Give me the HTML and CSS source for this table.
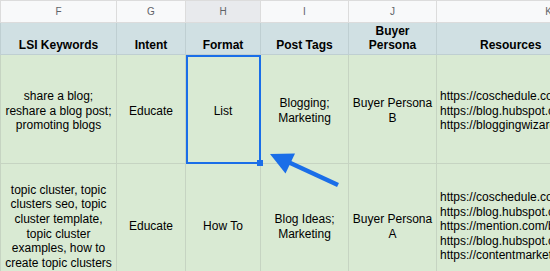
FILE: index.html
```html
<!DOCTYPE html>
<html>
<head>
<meta charset="utf-8">
<link rel="stylesheet" href="styles.css">
</head>
<body>
<div class="sheet">
  <table class="grid">
    <colgroup>
      <col class="c-f"><col class="c-g"><col class="c-h"><col class="c-i"><col class="c-j"><col class="c-k">
    </colgroup>
    <tr class="letters">
      <th>F</th><th>G</th><th class="sel-col">H</th><th>I</th><th>J</th><th>K</th>
    </tr>
    <tr class="head">
      <th>LSI Keywords</th><th>Intent</th><th>Format</th><th>Post Tags</th><th>Buyer<br>Persona</th><th class="res">Resources</th>
    </tr>
    <tr class="row1">
      <td>share a blog;<br>reshare a blog post;<br>promoting blogs</td>
      <td>Educate</td>
      <td class="selected">List<span class="handle"></span></td>
      <td>Blogging;<br>Marketing</td>
      <td>Buyer Persona<br>B</td>
      <td class="links">https://coschedule.com/blog/share-a-blog<br>https://blog.hubspot.com/marketing/promote<br>https://bloggingwizard.com/promote-blog</td>
    </tr>
    <tr class="row2">
      <td>topic cluster, topic<br>clusters seo, topic<br>cluster template,<br>topic cluster<br>examples, how to<br>create topic clusters</td>
      <td>Educate</td>
      <td>How To</td>
      <td>Blog Ideas;<br>Marketing</td>
      <td>Buyer Persona<br>A</td>
      <td class="links">https://coschedule.com/blog/topic-clusters<br>https://blog.hubspot.com/marketing/topic<br>https://mention.com/blog/topic-clusters<br>https://blog.hubspot.com/marketing/pillar<br>https://contentmarketinginstitute.com/</td>
    </tr>
  </table>
  <svg class="arrow" width="550" height="271" viewBox="0 0 550 271">
    <line x1="338" y1="185" x2="286" y2="161" stroke="#1a6ee8" stroke-width="4.5" stroke-linecap="butt"/>
    <polygon points="270,154 295,153.5 285.5,173.5" fill="#1a6ee8"/>
  </svg>
</div>
</body>
</html>
```
FILE: styles.css
```css
html, body {
  margin: 0;
  padding: 0;
  overflow: hidden;
  background: #ffffff;
}
.sheet {
  position: relative;
  width: 550px;
  height: 271px;
  overflow: hidden;
}
.grid {
  border-collapse: collapse;
  table-layout: fixed;
  width: 660px;
  font-family: "Liberation Sans", Arial, sans-serif;
  font-size: 12px;
  line-height: 14.6px;
  color: #000;
}
.c-f { width: 116px; }
.c-g { width: 69px; }
.c-h { width: 75px; }
.c-i { width: 88px; }
.c-j { width: 88px; }
.c-k { width: 224px; }
.grid th, .grid td {
  border: 1px solid #c6d4c2;
  padding: 0 2px;
  text-align: center;
  white-space: nowrap;
  overflow: hidden;
}
.letters th {
  height: 21px;
  background: #f8f9fa;
  border-color: #dcdcdc;
  font-weight: normal;
  font-size: 10px;
  color: #5f6368;
  vertical-align: middle;
  line-height: 12px;
}
.letters th.sel-col {
  background: #e8eaed;
}
.head th {
  height: 30px;
  background: #d0e0e3;
  border-color: #bfcfd2;
  font-weight: bold;
  vertical-align: bottom;
  padding-bottom: 1px;
}
.head th.res {
  text-align: left;
  padding-left: 43px;
}
.row1 td, .row2 td {
  background: #d9ead3;
  vertical-align: middle;
}
.row1 td {
  height: 104px;
  padding-top: 4px;
}
.row2 td {
  height: 123px;
  padding-top: 1px;
}
.grid td.links {
  text-align: left;
  padding-left: 3px;
}
.grid td.selected {
  position: relative;
  overflow: visible;
  outline: 2px solid #1a6ee8;
  outline-offset: -2px;
}
.handle {
  position: absolute;
  right: -3px;
  bottom: -3px;
  width: 6px;
  height: 6px;
  background: #1a6ee8;
}
.arrow {
  position: absolute;
  left: 0;
  top: 0;
  pointer-events: none;
}
```
